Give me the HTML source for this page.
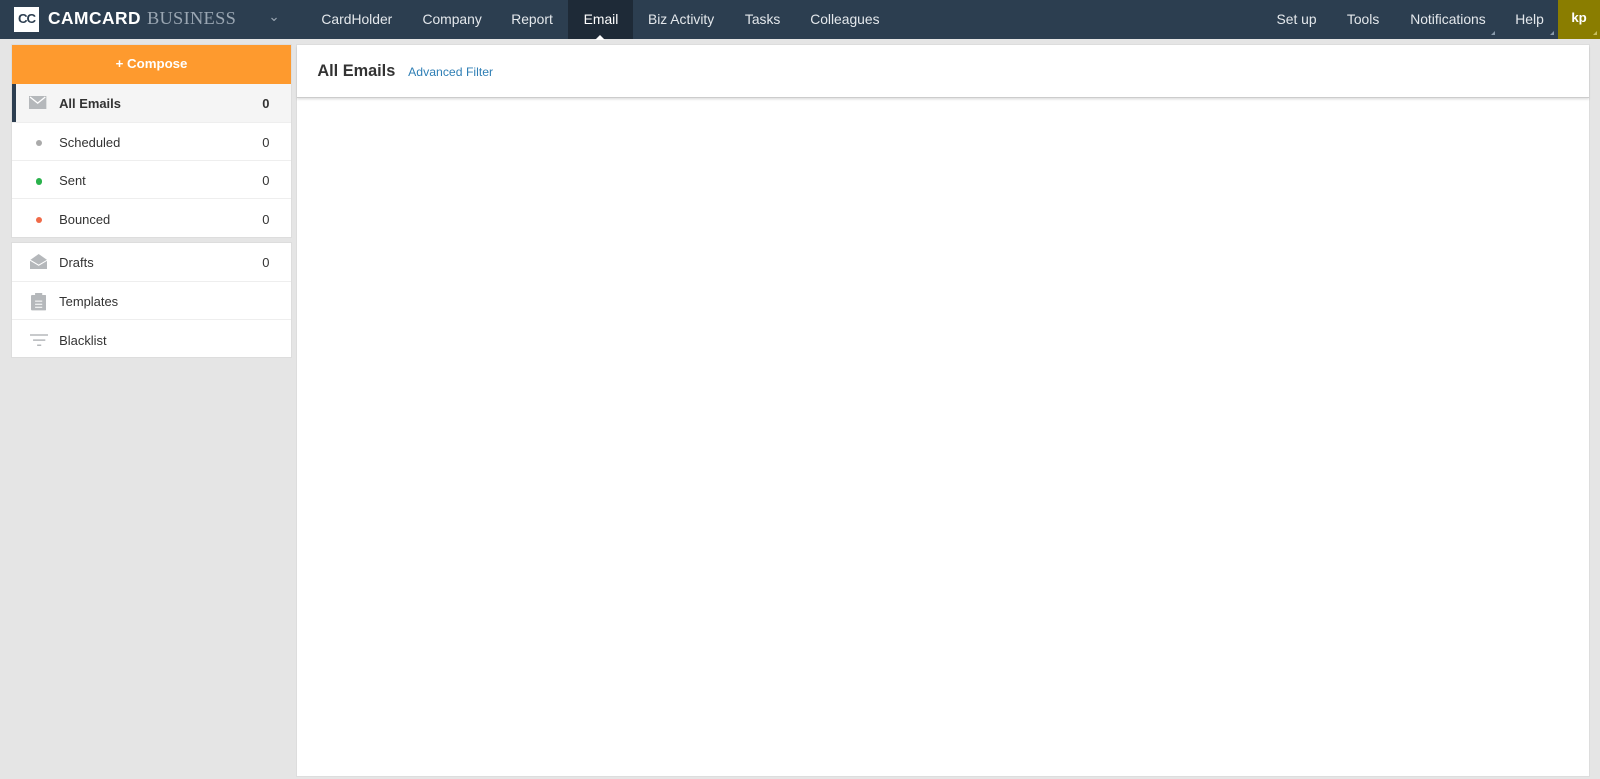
<!DOCTYPE html>
<html><head><meta charset="utf-8"><style>
*{box-sizing:border-box;margin:0;padding:0}
html,body{width:1600px;height:779px;overflow:hidden}
body{background:#e5e5e5;font-family:"Liberation Sans",Arial,sans-serif;position:relative}
#w{position:absolute;left:0;top:0;width:1568px;height:764px;zoom:1.0204}
.nav{position:absolute;left:0;top:0;width:1568px;height:38px;background:#2c3e50;color:#e4e8ec;font-size:13.6px}
.nav span{position:absolute;top:11px}
.logo{position:absolute;left:14px;top:7px;width:24px;height:24px;background:#fff;color:#2c3e50;font-weight:bold;font-size:13px;text-align:center;line-height:24px;letter-spacing:-1px}
.active{position:absolute;left:557px;top:0;width:63px;height:38px;background:#1e2a37}
.tri{position:absolute;left:583px;top:34px;border:5px solid transparent;border-bottom-color:#fff;border-top:0}
.kp{position:absolute;left:1527px;top:0;width:41px;height:38px;background:#8a7d00;color:#fff;font-weight:bold;font-size:13px;text-align:center;line-height:36px}
.corner{position:absolute;width:0;height:0;border-left:4px solid transparent;border-bottom:4px solid #8899aa;top:30px}
.box{position:absolute;left:11px;width:275px;background:#fff;border:1px solid #ddd}
.compose{height:38px;background:#fe9a2e;color:#fff;font-weight:bold;font-size:13px;text-align:center;line-height:38px}
.row{height:37.5px;position:relative;border-top:1px solid #eee;font-size:12.7px;color:#333}
.row .t{position:absolute;left:46px;top:12px}
.row .n{position:absolute;right:21px;top:12px}
.dot{position:absolute;left:23px;top:17px;width:6px;height:6px;border-radius:50%}
.main{position:absolute;left:290px;top:43px;width:1268px;height:718px;background:#fff;border:1px solid #ddd}
.hdr{height:52px;border-bottom:1px solid #ccc;box-shadow:0 2px 2px rgba(0,0,0,.12);position:relative}
</style></head><body><div id="w">
<div class="nav">
<div class="logo">CC</div>
<span style="left:47px;top:8px;font-size:17px;font-weight:bold;color:#fff;letter-spacing:.5px">CAMCARD</span>
<span style="left:144px;top:8px;font-size:18px;font-family:'Liberation Serif',serif;color:#9aa6b2;letter-spacing:.3px">BUSINESS</span>
<span style="left:263px;top:9px;color:#9aa6b2;font-size:13px">&#8964;</span>
<div class="active"></div><div class="tri"></div>
<span style="left:315px">CardHolder</span>
<span style="left:414px">Company</span>
<span style="left:501px">Report</span>
<span style="left:572px;color:#fff">Email</span>
<span style="left:635px">Biz Activity</span>
<span style="left:730px">Tasks</span>
<span style="left:794px">Colleagues</span>
<span style="left:1251px">Set up</span>
<span style="left:1320px">Tools</span>
<span style="left:1382px">Notifications</span>
<span style="left:1485px">Help</span>
<div class="corner" style="left:1461px"></div><div class="corner" style="left:1519px"></div>
<div class="kp">kp</div><div class="corner" style="left:1561px;border-bottom-color:#c8bf60"></div>
</div>
<div class="box" style="top:43px;height:190px">
<div class="compose">+ Compose</div>
<div class="row" style="background:#f5f5f5;border-top:0;border-left:4px solid #2c3e50"><svg style="position:absolute;left:13px;top:12px" width="17" height="13"><rect width="17" height="13" fill="#b5b8bb"/><path d="M1 1l7.5 6 7.5-6" stroke="#fff" fill="none" stroke-width="1.3"/></svg><span class="t" style="left:42px;font-weight:bold">All Emails</span><span class="n" style="font-weight:bold">0</span></div>
<div class="row"><div class="dot" style="background:#aaa"></div><span class="t">Scheduled</span><span class="n">0</span></div>
<div class="row"><div class="dot" style="background:#2ab24c"></div><span class="t">Sent</span><span class="n">0</span></div>
<div class="row"><div class="dot" style="background:#f06a48"></div><span class="t">Bounced</span><span class="n">0</span></div>
</div>
<div class="box" style="top:237px;height:114px">
<div class="row" style="border-top:0"><svg style="position:absolute;left:17px;top:11px" width="17" height="15"><path d="M0 6L8.5 0 17 6V15H0Z" fill="#b5b8bb"/><path d="M0 6l8.5 5 8.5-5" stroke="#fff" fill="none"/></svg><span class="t">Drafts</span><span class="n">0</span></div>
<div class="row"><svg style="position:absolute;left:18px;top:11px" width="15" height="17"><rect y="2" width="15" height="15" rx="1" fill="#b5b8bb"/><rect x="4" y="0" width="7" height="4" fill="#b5b8bb"/><path d="M4 8h7M4 11h7M4 14h7" stroke="#fff"/></svg><span class="t">Templates</span></div>
<div class="row"><svg style="position:absolute;left:17px;top:13px" width="18" height="12"><path d="M0 1h18M3 6h12M7 11h4" stroke="#b5b8bb" stroke-width="1.5"/></svg><span class="t">Blacklist</span></div>
</div>
<div class="main"><div class="hdr">
<span style="position:absolute;left:20px;top:17px;font-size:16px;font-weight:bold;color:#333">All Emails</span>
<span style="position:absolute;left:109px;top:20px;font-size:12px;color:#2f7fb5">Advanced Filter</span>
</div></div>
</div></body></html>
